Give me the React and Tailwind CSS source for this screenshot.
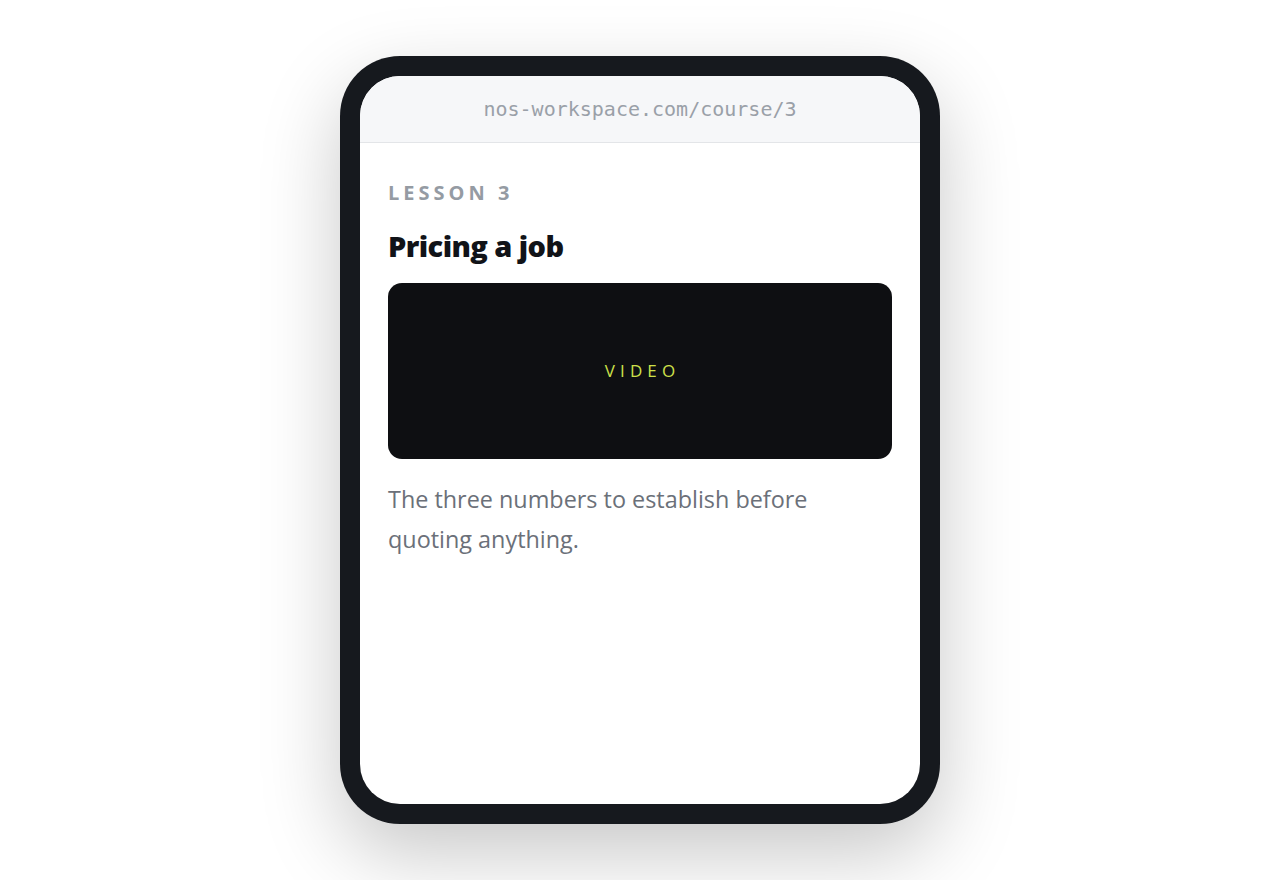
export default function App() {
  return (
    <div className="min-h-screen w-full bg-white flex items-center justify-center">
      <div className="w-[600px] h-[768px] rounded-[60px] bg-[#16191e] p-5 shadow-[0_30px_80px_rgba(0,0,0,0.22)]">
        <div className="h-full w-full rounded-[40px] bg-white overflow-hidden flex flex-col">
          <div className="h-[67px] shrink-0 bg-[#f6f7f9] border-b border-[#e3e5e8] flex items-center justify-center">
            <span className="text-[20px] text-[#9aa0a8]" style={{ fontFamily: '"DejaVu Sans Mono", monospace' }}>
              nos-workspace.com/course/3
            </span>
          </div>
          <div className="px-7 pt-[40px]" style={{ fontFamily: '"Open Sans", "Noto Sans", sans-serif' }}>
            <div className="text-[20px] font-bold tracking-[0.2em] text-[#959ba3] leading-none">LESSON 3</div>
            <h1 className="mt-[28px] text-[29px] font-extrabold text-[#111318] leading-none tracking-[-0.02em]">
              Pricing a job
            </h1>
            <div className="mt-[23px] h-[176px] rounded-[14px] bg-[#0e0f12] flex items-center justify-center">
              <span className="text-[17px] tracking-[0.3em] text-[#cde04a] pl-[0.3em]">VIDEO</span>
            </div>
            <p className="mt-[20px] text-[23.4px] leading-[40px] text-[#6b7079] pr-[50px]">
              The three numbers to establish before quoting anything.
            </p>
          </div>
        </div>
      </div>
    </div>
  );
}
